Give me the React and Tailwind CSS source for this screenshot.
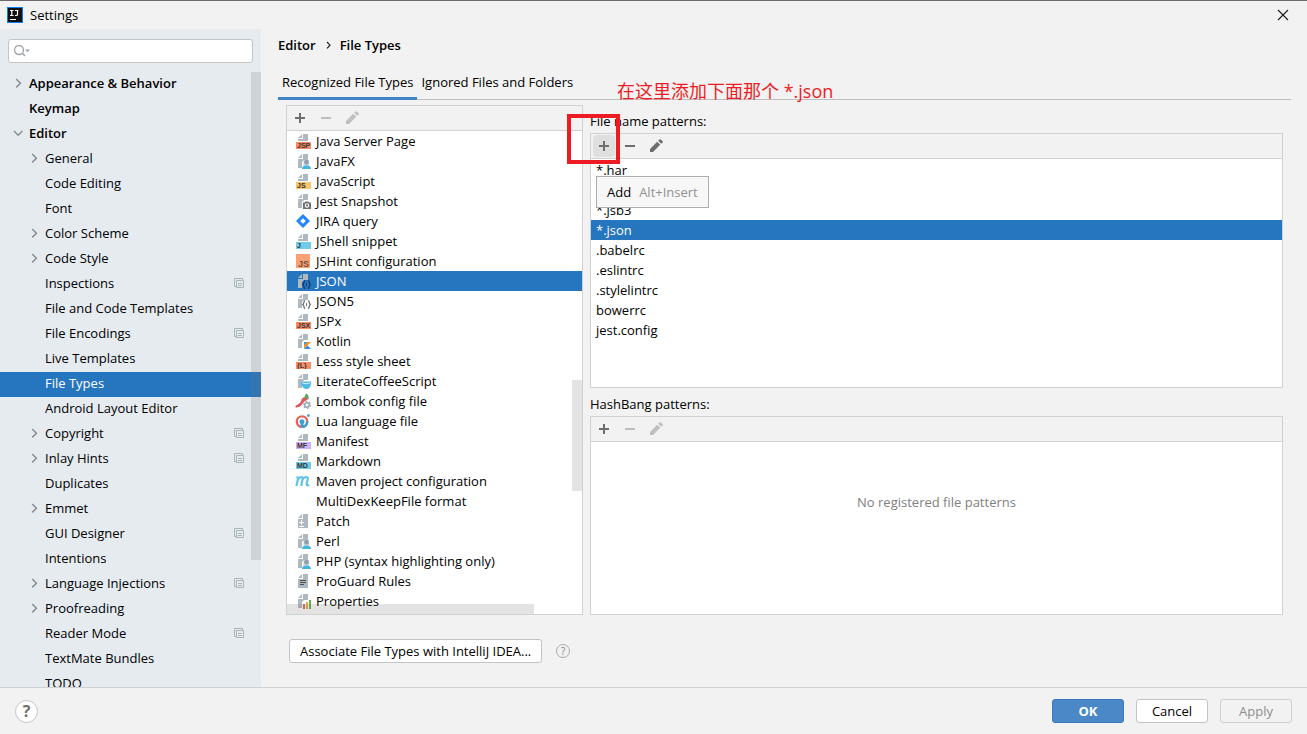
import { useState } from "react";

const TREE = [
  { name: "Appearance & Behavior", level: 0, arrow: "right" },
  { name: "Keymap", level: 0 },
  { name: "Editor", level: 0, arrow: "down" },
  { name: "General", level: 1, arrow: "right" },
  { name: "Code Editing", level: 1 },
  { name: "Font", level: 1 },
  { name: "Color Scheme", level: 1, arrow: "right" },
  { name: "Code Style", level: 1, arrow: "right" },
  { name: "Inspections", level: 1, project: true },
  { name: "File and Code Templates", level: 1 },
  { name: "File Encodings", level: 1, project: true },
  { name: "Live Templates", level: 1 },
  { name: "File Types", level: 1 },
  { name: "Android Layout Editor", level: 1 },
  { name: "Copyright", level: 1, arrow: "right", project: true },
  { name: "Inlay Hints", level: 1, arrow: "right", project: true },
  { name: "Duplicates", level: 1 },
  { name: "Emmet", level: 1, arrow: "right" },
  { name: "GUI Designer", level: 1, project: true },
  { name: "Intentions", level: 1 },
  { name: "Language Injections", level: 1, arrow: "right", project: true },
  { name: "Proofreading", level: 1, arrow: "right" },
  { name: "Reader Mode", level: 1, project: true },
  { name: "TextMate Bundles", level: 1 },
  { name: "TODO", level: 1 },
];

const FILE_TYPES = [
  { name: "Java Server Page", icon: "band", tag: "JSP", color: "#f98b66" },
  { name: "JavaFX", icon: "user" },
  { name: "JavaScript", icon: "band", tag: "JS", color: "#f8c46c" },
  { name: "Jest Snapshot", icon: "camera" },
  { name: "JIRA query", icon: "jira" },
  { name: "JShell snippet", icon: "band", tag: "J", color: "#70cbe8" },
  { name: "JSHint configuration", icon: "jshint" },
  { name: "JSON", icon: "json" },
  { name: "JSON5", icon: "json" },
  { name: "JSPx", icon: "band", tag: "JSX", color: "#f98b66" },
  { name: "Kotlin", icon: "kotlin" },
  { name: "Less style sheet", icon: "band", tag: "{L}", color: "#f98b66" },
  { name: "LiterateCoffeeScript", icon: "coffee" },
  { name: "Lombok config file", icon: "lombok" },
  { name: "Lua language file", icon: "lua" },
  { name: "Manifest", icon: "band", tag: "MF", color: "#cbb2fb" },
  { name: "Markdown", icon: "band", tag: "MD", color: "#70cbe8" },
  { name: "Maven project configuration", icon: "maven" },
  { name: "MultiDexKeepFile format", icon: "none" },
  { name: "Patch", icon: "patch" },
  { name: "Perl", icon: "user" },
  { name: "PHP (syntax highlighting only)", icon: "user" },
  { name: "ProGuard Rules", icon: "text" },
  { name: "Properties", icon: "chart" },
];

const PATTERNS = [
  "*.har",
  "*.jsb2",
  "*.jsb3",
  "*.json",
  ".babelrc",
  ".eslintrc",
  ".stylelintrc",
  "bowerrc",
  "jest.config",
];

/* =======================
   ICONS
   ======================= */
function Svg({ children }) {
  return (
    <svg width="16" height="16" viewBox="0 0 16 16" fill="none" className="shrink-0" aria-hidden="true">
      {children}
    </svg>
  );
}

function Arrow({ dir }) {
  if (!dir) return <span className="w-4 shrink-0" />;
  return (
    <Svg>
      <path
        d={dir === "right" ? "M6.2 4 L10.4 8.2 L6.2 12.4" : "M4 6 L8.2 10.2 L12.4 6"}
        stroke="#8a8d90"
        strokeWidth="1.5"
      />
    </Svg>
  );
}

function ProjectIcon() {
  return (
    <Svg>
      <path d="M5.5 11.5 H3.5 V3.5 H11.5 V5.5" stroke="#a9b4bb" />
      <path d="M5.5 5.5 H12.5 V12.5 H5.5 Z M7 8.5 H11 M7 10.5 H11" stroke="#a9b4bb" />
    </Svg>
  );
}

// full page outline, or one with the lower right corner left free for a badge
function Page({ cut }) {
  return (
    <g fill="#afb8be">
      <path d="M7 1 L3 5 H7 Z" />
      <path d={cut ? "M8 1 V6 H3 V15 H7 V9 L9 7 H13 V1 Z" : "M8 1 V6 H3 V15 H13 V1 Z"} />
    </g>
  );
}

function FileIcon({ type, tag, color }) {
  switch (type) {
    case "band":
      return (
        <Svg>
          <path d="M7 1 L3 5 H7 Z" fill="#afb8be" />
          <path d="M8 1 V6 H3 V8 H13 V1 Z" fill="#afb8be" />
          <path d="M1 9 H16 V16 H1 Z" fill={color} />
          <text x="2" y="15" fontSize="7" fontWeight="700" fill="#3b3231" fontFamily="Liberation Sans, sans-serif">
            {tag}
          </text>
        </Svg>
      );
    case "user":
      return (
        <Svg>
          <Page cut />
          <path d="M8.5 7 H14 V13 H8.5 Z" fill="#cdd5da" />
          <circle cx="11.5" cy="9.2" r="2.4" fill="#8fa0ac" />
          <path d="M7 16 C7 13.6 9 12.6 11.5 12.6 C14 12.6 16 13.6 16 16 Z" fill="#40b6e0" />
        </Svg>
      );
    case "camera":
      return (
        <Svg>
          <Page cut />
          <path d="M8 9.6 H9.8 L10.6 8.4 H13.4 L14.2 9.6 H16 V16 H8 Z" fill="#6e6e6e" />
          <circle cx="12" cy="12.4" r="1.7" stroke="#fff" strokeWidth="1.1" />
        </Svg>
      );
    case "jira":
      return (
        <Svg>
          <path d="M8 1 L15 8 L8 15 L1 8 Z" fill="#2684ff" />
          <path d="M8 5.2 L10.8 8 L8 10.8 L5.2 8 Z" fill="#fff" />
        </Svg>
      );
    case "jshint":
      return (
        <Svg>
          <path d="M1 1 H15 V15 H1 Z" fill="#f6a176" />
          <text x="3" y="14" fontSize="9" fontWeight="700" fill="#7a4a37" fontFamily="Liberation Sans, sans-serif">
            JS
          </text>
        </Svg>
      );
    case "json":
      return (
        <Svg>
          <Page cut />
          <path
            d="M10.2 7.6 C8.4 7.6 9.6 10.4 7.8 11.5 C9.6 12.6 8.4 15.4 10.2 15.4 M13 7.6 C14.8 7.6 13.6 10.4 15.4 11.5 C13.6 12.6 14.8 15.4 13 15.4"
            stroke="currentColor"
            strokeWidth="1.3"
          />
          <path d="M11.6 9.8 V13.2" stroke="currentColor" strokeWidth="1" />
        </Svg>
      );
    case "kotlin":
      return (
        <Svg>
          <Page cut />
          <path d="M9 9 H16 L9 16 Z" fill="#f58b2a" />
          <path d="M9 9 H12 L9 12 Z" fill="#2a9fe0" />
          <path d="M9 16 L12.5 12.5 L16 16 Z" fill="#2a8fe0" />
        </Svg>
      );
    case "coffee":
      return (
        <Svg>
          <Page cut />
          <path d="M6 8.5 H16 V11 C15.6 14 14 16 11.5 16 C9 16 7.4 14 6 11 Z" fill="#4db9e4" />
          <path d="M7 9.8 C9 11 13 11 15 9.8" stroke="#d3f0fa" strokeWidth="1" />
        </Svg>
      );
    case "lombok":
      return (
        <Svg>
          <path d="M9 5.4 C9.6 2.4 10.6 1 11.8 0.4 C13.6 2.6 14.4 4.6 13.2 6.6 Z" fill="#59a869" />
          <path d="M8.4 4.6 C10.8 4.4 12.6 5.6 12.6 7 C9.4 8 8.8 9.6 6.6 12 C4.8 14 2.6 14.6 0.8 14.4 C0.2 13.8 0.4 13 1 12.6 C3.6 11.4 5.4 10 6.2 7.8 C6.6 6.4 7.2 5 8.4 4.6 Z" fill="#db5860" />
          <circle cx="12" cy="12" r="4.2" fill="#fff" />
          <circle cx="12" cy="12" r="2.2" stroke="#9aa7b0" strokeWidth="1.5" />
          <circle cx="12" cy="12" r="3.4" stroke="#9aa7b0" strokeWidth="1.2" strokeDasharray="1.7 1.86" />
        </Svg>
      );
    case "lua":
      return (
        <Svg>
          <circle cx="7" cy="8.6" r="5.2" stroke="#e2665c" strokeWidth="2.4" />
          <path d="M12.2 8.6 A5.2 5.2 0 0 1 7 13.8" stroke="#3aa0d8" strokeWidth="2.4" />
          <path d="M4.6 9.4 A2.5 2.5 0 1 1 9.4 9.4 L8.4 11 V14 H5.6 V11 Z" fill="#3aa0d8" />
          <circle cx="13.4" cy="2.6" r="1.4" fill="#3aa0d8" />
        </Svg>
      );
    case "maven":
      return (
        <Svg>
          <path
            d="M1.4 13 L3.4 4 M3 6.6 C4.4 3.8 8 3.2 7.6 6 L6.2 13 M7.4 6.6 C9 3.8 13.4 3 12.8 6 L11.6 11 C11.4 12.6 12.8 12.6 14 11.6 M1.4 4.4 H3.4"
            stroke="#62c3e6"
            strokeWidth="2.2"
          />
        </Svg>
      );
    case "patch":
      return (
        <Svg>
          <Page />
          <path d="M4 9.5 H9 M6.5 7 V12 M4 13.5 H9" stroke="#fff" />
        </Svg>
      );
    case "text":
      return (
        <Svg>
          <Page />
          <path d="M5 7.5 H11 M5 9.5 H11 M5 11.5 H9" stroke="#4a5055" />
        </Svg>
      );
    case "chart":
      return (
        <Svg>
          <Page cut />
          <path d="M8 11 H10 V16 H8 Z" fill="#e0663c" />
          <path d="M11 9 H13 V16 H11 Z" fill="#eda63c" />
          <path d="M14 7 H16 V16 H14 Z" fill="#5fae4e" />
        </Svg>
      );
    default:
      return <Svg />;
  }
}

/* =======================
   SMALL PARTS
   ======================= */
function Toolbar({ label, enabled, hovered }) {
  const active = "#6e6e6e";
  const rest = enabled ? active : "#bfbfbf";
  const btn = "flex size-[22px] items-center justify-center rounded-sm";

  return (
    <div className="flex h-[25px] shrink-0 items-center gap-1 border-b border-[#d1d1d1] bg-[#f2f2f2] px-0.5">
      <button aria-label={`Add ${label}`} className={`${btn} ${hovered ? "bg-[#dfdfdf]" : ""}`}>
        <Svg>
          <path d="M3 8 H13 M8 3 V13" stroke={active} strokeWidth="2" />
        </Svg>
      </button>
      <button aria-label={`Remove ${label}`} className={btn}>
        <Svg>
          <path d="M3 8 H13" stroke={rest} strokeWidth="2" />
        </Svg>
      </button>
      <button aria-label={`Edit ${label}`} className={btn}>
        <Svg>
          <path d="M2 11 L9.2 3.8 L12.2 6.8 L5 14 H2 Z" fill={rest} />
          <path d="M10.2 2.8 L11.6 1.4 Q12.2 1 12.8 1.4 L14.6 3.2 Q15 3.8 14.6 4.4 L13.2 5.8 Z" fill={rest} />
        </Svg>
      </button>
    </div>
  );
}

function TreeRow({ item, selected, onSelect }) {
  return (
    <li>
      <button
        onClick={onSelect}
        className={`flex h-[25px] w-full items-center gap-[3px] pr-3.5 pb-[3px] text-left ${
          item.level === 0 ? "pl-2.5 font-semibold" : "pl-[26px]"
        } ${selected ? "bg-[#2675bf] text-white" : ""}`}
      >
        <Arrow dir={item.arrow} />
        <span className="flex-1 truncate">{item.name}</span>
        {item.project && <ProjectIcon />}
      </button>
    </li>
  );
}

export default function App() {
  const [page, setPage] = useState("File Types");
  const [fileType, setFileType] = useState("JSON");
  const [pattern, setPattern] = useState("*.json");

  return (
    <div className="flex h-screen flex-col overflow-hidden border-t border-[#6b696b] bg-[#f2f2f2] font-['Open_Sans','Noto_Sans_CJK_SC',sans-serif] text-[13px] leading-5 text-black">
      {/* TITLE BAR */}
      <header className="flex h-7 shrink-0 items-center gap-[7px] pr-4 pl-[7px]">
        <Svg>
          <path d="M0 0 H16 V16 H0 Z" fill="#087cfa" />
          <path d="M1 1 H15 V15 H1 Z" fill="#111" />
          <path d="M3 3.5 H6.5 M4.75 3.5 V8.5 M3 8.5 H6.5 M8 3.5 H11.4 M10.5 3.5 V7.2 Q10.5 8.5 9.2 8.5 H8" stroke="#fff" strokeWidth="1.2" />
          <path d="M3 12.5 H9" stroke="#fff" />
        </Svg>
        <h1 className="flex-1">Settings</h1>
        <button aria-label="Close">
          <Svg>
            <path d="M3 3 L13 13 M13 3 L3 13" stroke="#1a1a1a" strokeWidth="1.1" />
          </Svg>
        </button>
      </header>

      <div className="flex min-h-0 flex-1">
        {/* SIDEBAR */}
        <aside className="flex w-[261px] shrink-0 flex-col bg-[#e6ebf0]">
          <label className="mx-2 mt-2.5 mb-[9px] flex h-6 shrink-0 items-center rounded-[3px] border border-[#c4c4c4] bg-white pl-1">
            <svg width="18" height="16" viewBox="0 0 18 16" fill="none" aria-hidden="true">
              <circle cx="6" cy="7" r="4.5" stroke="#9da5ab" strokeWidth="1.3" />
              <path d="M9.3 10.3 L12 13" stroke="#9da5ab" strokeWidth="1.5" />
              <path d="M12 6.5 H17 L14.5 9.3 Z" fill="#9da5ab" />
            </svg>
            <input type="text" aria-label="Search settings" className="min-w-0 flex-1 outline-none" />
          </label>
          <nav className="relative min-h-0 flex-1 overflow-hidden">
            <ul>
              {TREE.map((item) => (
                <TreeRow
                  key={item.name}
                  item={item}
                  selected={item.name === page}
                  onSelect={() => setPage(item.name)}
                />
              ))}
            </ul>
            <div className="absolute top-0 right-0 h-[488px] w-2.5 bg-[#737373]/20" />
          </nav>
        </aside>

        {/* CONTENT */}
        <main className="flex min-w-0 flex-1 flex-col pt-1.5 pr-4 pl-[17px]">
          <div className="flex items-center font-semibold">
            <span>Editor</span>
            <svg width="24" height="16" viewBox="0 0 24 16" fill="none" aria-hidden="true">
              <path d="M11 5 L14 8.2 L11 11.4" stroke="#222" strokeWidth="1.2" />
            </svg>
            <span>File Types</span>
          </div>

          <div role="tablist" className="relative mt-3 flex h-[33px] shrink-0 border-b border-[#bfbfbf]">
            <button role="tab" aria-selected="true" className="-mb-px border-b-3 border-[#4083c9] px-1">
              Recognized File Types
            </button>
            <button role="tab" aria-selected="false" className="-mb-px border-b-3 border-transparent px-1">
              Ignored Files and Folders
            </button>
            <p className="absolute top-2.5 left-[339px] text-lg leading-7 whitespace-nowrap text-[#ed1c24]">
              在这里添加下面那个 *.json
            </p>
          </div>

          <div className="flex min-h-0 flex-1 gap-[7px] px-2 pt-[5px]">
            {/* FILE TYPES */}
            <section className="flex w-[297px] shrink-0 flex-col border border-[#d1d1d1] bg-white">
              <Toolbar label="file type" />
              <div className="relative min-h-0 flex-1 overflow-hidden">
                <ul>
                  {FILE_TYPES.map((t) => {
                    const active = t.name === fileType;
                    return (
                      <li key={t.name}>
                        <button
                          onClick={() => setFileType(t.name)}
                          className={`flex h-5 w-full items-center gap-[5px] pl-2 text-left ${
                            active ? "bg-[#2675bf] text-white" : ""
                          }`}
                        >
                          <span className={active ? "text-[#123a68]" : "text-[#6e6e6e]"}>
                            <FileIcon type={t.icon} tag={t.tag} color={t.color} />
                          </span>
                          {t.name}
                        </button>
                      </li>
                    );
                  })}
                </ul>
                <div className="absolute right-0 bottom-[123px] h-[111px] w-2.5 bg-[#737373]/20" />
                <div className="absolute bottom-0 left-0 h-2.5 w-[247px] bg-[#737373]/20" />
              </div>
            </section>

            {/* PATTERNS */}
            <div className="flex min-w-0 flex-1 flex-col">
              <h2 className="mt-1.5 mb-0.5">File name patterns:</h2>
              <section className="relative flex flex-9 flex-col border border-[#d1d1d1] bg-white">
                <Toolbar label="file name pattern" enabled hovered />
                <ul className="pt-px">
                  {PATTERNS.map((p) => (
                    <li key={p}>
                      <button
                        onClick={() => setPattern(p)}
                        className={`h-5 w-full px-[5px] text-left ${
                          p === pattern ? "bg-[#2675bf] text-white" : ""
                        }`}
                      >
                        {p}
                      </button>
                    </li>
                  ))}
                </ul>
                {/* marker round the add button */}
                <div className="absolute -top-5 -left-6 h-[50px] w-[53px] border-4 border-[#ed1c24]" />
                <div
                  role="tooltip"
                  className="absolute top-[42px] left-[5px] flex h-8 items-center gap-2 border border-[#adadad] bg-[#f7f7f7] px-2.5 whitespace-nowrap"
                >
                  <span>Add</span>
                  <span className="text-[#919191]">Alt+Insert</span>
                </div>
              </section>

              <h2 className="mt-1.5 mb-0.5">HashBang patterns:</h2>
              <section className="flex flex-7 flex-col border border-[#d1d1d1] bg-white">
                <Toolbar label="hashbang pattern" />
                <p className="pt-[50px] text-center text-[#808080]">No registered file patterns</p>
              </section>
            </div>
          </div>

          <div className="my-6 flex items-center gap-3.5 pl-[11px]">
            <button className="flex h-6 items-center rounded-[3px] border border-[#c4c4c4] bg-white px-2.5">
              Associate File Types with IntelliJ IDEA...
            </button>
            <button
              aria-label="About file type associations"
              className="flex size-3.5 items-center justify-center rounded-full border border-[#a5adb3] text-[10px] leading-3 text-[#7f8589]"
            >
              ?
            </button>
          </div>
        </main>
      </div>

      {/* FOOTER */}
      <footer className="flex h-[47px] shrink-0 items-center gap-3 border-t border-[#d1d1d1] px-[15px]">
        <button
          aria-label="Help"
          className="mr-auto flex size-[23px] items-center justify-center rounded-full border border-[#c4c4c4] bg-white text-base font-bold text-[#6e6e6e]"
        >
          ?
        </button>
        <button className="flex h-6 w-[72px] items-center justify-center rounded-[3px] border border-[#3c78bd] bg-[#4a88c7] font-bold text-white">
          OK
        </button>
        <button className="flex h-6 w-[72px] items-center justify-center rounded-[3px] border border-[#c4c4c4] bg-white">
          Cancel
        </button>
        <button
          disabled
          className="flex h-6 w-[72px] items-center justify-center rounded-[3px] border border-[#cfcfcf] text-[#8c8c8c]"
        >
          Apply
        </button>
      </footer>
    </div>
  );
}
